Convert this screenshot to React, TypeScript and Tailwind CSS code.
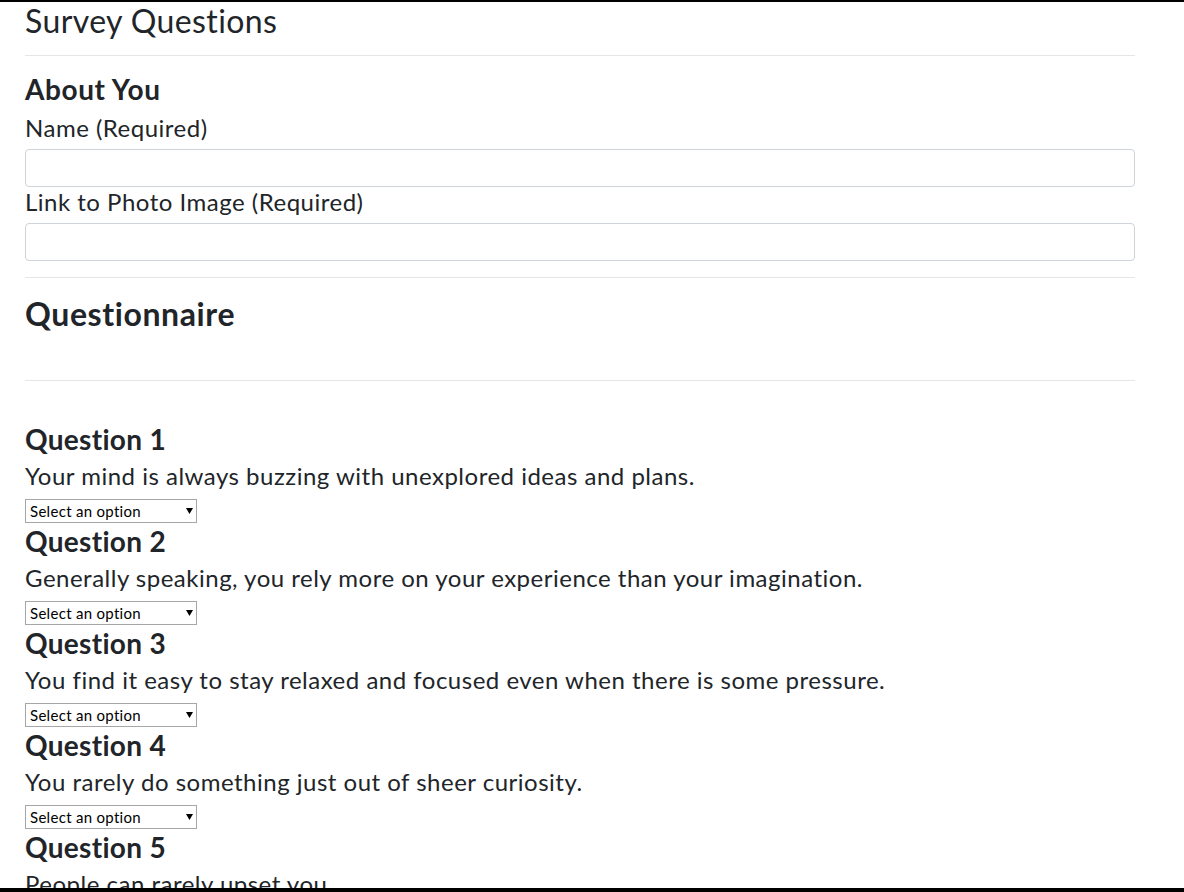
import React from "react";

const questions = [
  "Your mind is always buzzing with unexplored ideas and plans.",
  "Generally speaking, you rely more on your experience than your imagination.",
  "You find it easy to stay relaxed and focused even when there is some pressure.",
  "You rarely do something just out of sheer curiosity.",
  "People can rarely upset you.",
  "It is often difficult for you to relate to other people’s feelings.",
  "In a discussion, truth should be more important than people’s sensitivities.",
  "You rarely get carried away by fantasies and ideas.",
  "You think that everyone’s views should be respected regardless of whether they are supported by facts or not.",
  "You feel more energetic after spending time with a group of people.",
];

function SelectBox() {
  return (
    <div className="relative mt-[5px] h-[24px] w-[172px]">
      <select
        defaultValue=""
        className="block h-[24px] w-[172px] appearance-none border border-[#a6a6a6] bg-white pl-[4px] pr-[20px] text-[15px] leading-[22px] tracking-[0.3px] text-black outline-none"
        style={{ fontFamily: "Lato, 'Noto Sans', sans-serif" }}
      >
        <option value="">Select an option</option>
        <option value="1">1 (Strongly Disagree)</option>
        <option value="2">2</option>
        <option value="3">3</option>
        <option value="4">4</option>
        <option value="5">5 (Strongly Agree)</option>
      </select>
      <svg
        className="pointer-events-none absolute left-[161px] top-[9px]"
        width="7"
        height="6"
        viewBox="0 0 7 6"
      >
        <path d="M0 0 H7 L3.5 6 Z" fill="#000" />
      </svg>
    </div>
  );
}

export default function App() {
  return (
    <div
      className="min-h-screen border-t-2 border-black bg-white text-[#212529]"
      style={{ fontFamily: "Lato, 'Noto Sans', sans-serif" }}
    >
      <div className="ml-[25px] w-[1110px] pb-10">
        <h2 className="text-[32px] font-normal leading-[38px] tracking-[0.4px]">Survey Questions</h2>
        <hr className="mt-[15px] border-0 border-t border-[#e6e6e6]" />

        <h3 className="mt-[16px] mb-[9px] text-[28px] font-bold leading-[34px] tracking-[0.6px]">About You</h3>
        <div>
          <label className="mb-[8px] block text-[24px] leading-[26px] tracking-[0.5px]">Name (Required)</label>
          <input
            type="text"
            className="block h-[38px] w-full rounded border border-[#ced4da] bg-white px-3 text-base outline-none"
          />
        </div>
        <div className="mt-[2px]">
          <label className="mb-[8px] block text-[24px] leading-[26px] tracking-[0.5px]">
            Link to Photo Image (Required)
          </label>
          <input
            type="text"
            className="block h-[38px] w-full rounded border border-[#ced4da] bg-white px-3 text-base outline-none"
          />
        </div>
        <hr className="mt-[16px] border-0 border-t border-[#e6e6e6]" />

        <h2 className="mt-[17px] text-[32px] font-bold leading-[38px] tracking-[0.6px]">Questionnaire</h2>
        <hr className="mt-[47px] border-0 border-t border-[#e6e6e6]" />

        <div className="mt-[41px]">
          {questions.map((q, i) => (
            <div key={i} className="mb-[1px]">
              <h3 className="text-[28px] font-bold leading-[34px] tracking-[0.3px]">Question {i + 1}</h3>
              <p className="mt-[2px] text-[24px] leading-[36px] tracking-[0.5px]">{q}</p>
              <SelectBox />
            </div>
          ))}
        </div>
      </div>
      <div className="fixed bottom-0 left-0 h-[4px] w-full bg-black" />
    </div>
  );
}
